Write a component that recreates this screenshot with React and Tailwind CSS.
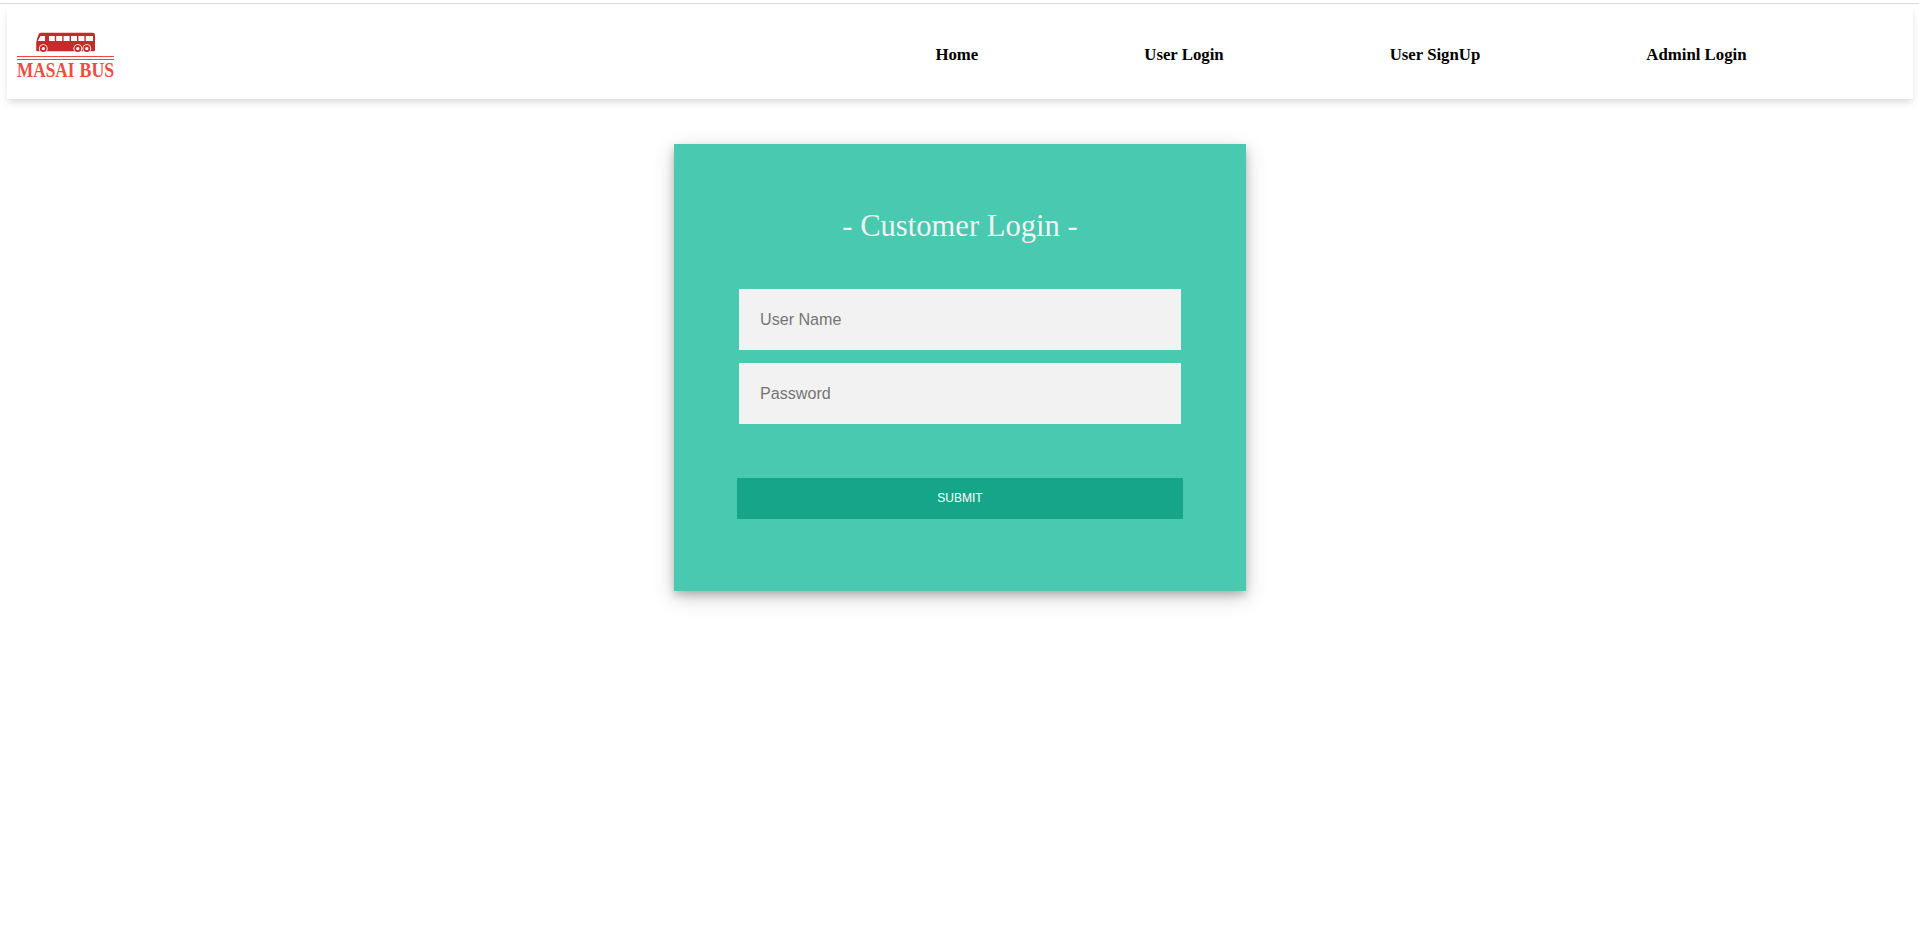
function Logo() {
  return (
    <svg className="h-[91px] w-[120px] shrink-0 overflow-visible" viewBox="7 8 120 91" role="img" aria-label="Masai Bus">
      <path d="M40.500 32.700 H92.500 Q95 32.700 95 35 V50 Q95 51.300 93.500 51.300 H37.500 Q36.200 51.300 36.200 50 V43 Q36.800 38 39 33.500 Z" fill="#c62b2b" />
      <path d="M40.500 36 H45 V41 H37.800 Z M49 36 h5.800 v5 h-5.800z M56.200 36 h6 v5 h-6z M63.600 36 h6 v5 h-6z M71 36 h6 v5 h-6z M78.400 36 h6 v5 h-6z M85.800 36 h7.200 v5 h-7.200z" fill="#fff" />
      {[43.3, 77.8, 86.8].map((x) => (
        <g key={x}>
          <circle cx={x} cy="48.600" r="4.400" fill="#fff" />
          <circle cx={x} cy="48.600" r="2.600" fill="#fff" stroke="#c62b2b" strokeWidth="1.800" />
        </g>
      ))}
      <path d="M17 56.500 H114 M17 59.500 H114" stroke="#f0473f" strokeWidth="1.100" />
      <g fontFamily="Liberation Serif, serif" fontWeight="700" fontSize="20.500" fill="#ef4c45">
        <text transform="translate(17 77) scale(0.84 1)">MASAI</text>
        <text transform="translate(79.500 77) scale(0.87 1)">BUS</text>
      </g>
    </svg>
  );
}

export default function App() {
  return (
    <div className="flex min-h-screen flex-col border-t border-transparent bg-white font-['Liberation_Serif',serif]">
      <div className="mt-[2px] h-px bg-[#dcdcdc]" />
      <header className="mr-[6px] ml-[7px] mt-1 flex h-[91px] items-center shadow-[0_4px_7px_-1px_rgba(0,0,0,0.15)]">
        <Logo />
        <nav className="flex items-center gap-[166px] pt-[2px] pl-[808.4px] text-[16.8px] leading-5 font-bold text-black">
          <a>Home</a>
          <a>User Login</a>
          <a>User SignUp</a>
          <a>Adminl Login</a>
        </nav>
      </header>
      <main className="mt-[45px] ml-[674px] flex h-[447px] w-[572px] flex-col items-center bg-[#48c9b0] shadow-[0_4px_8px_rgba(0,0,0,0.2),0_6px_20px_rgba(0,0,0,0.19)]">
        <h1 className="mt-[64px] text-[30.6px] leading-9 text-[#f2f2f2]">- Customer Login -</h1>
        <form className="mt-[45px] flex flex-col items-center font-['Liberation_Sans',sans-serif]">
          <input placeholder="User Name" className="h-[61px] w-[442px] bg-[#f2f2f2] px-[21px] text-[16.13px] placeholder:text-[#757575]" />
          <input placeholder="Password" type="password" className="mt-[13px] h-[61px] w-[442px] bg-[#f2f2f2] px-[21px] text-[16.13px] placeholder:text-[#757575]" />
          <button type="button" className="mt-[54px] h-[41px] w-[446px] bg-[#17a589] pb-[2px] text-xs text-white">SUBMIT</button>
        </form>
      </main>
    </div>
  );
}
